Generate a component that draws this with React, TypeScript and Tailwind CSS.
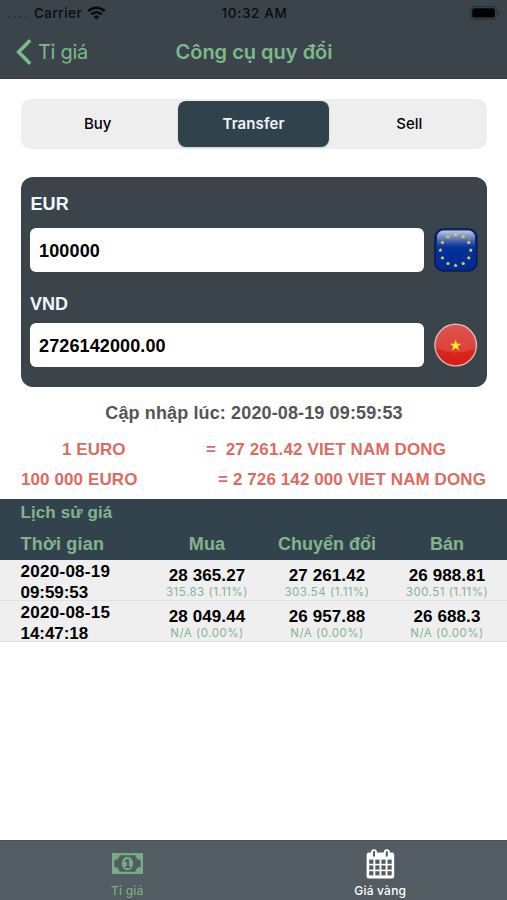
const SYSTEM = "font-['Inter','Noto_Sans',sans-serif]";

interface Rate {
  value: string;
  change: string;
}

interface HistoryRow {
  date: string;
  time: string;
  rates: Rate[];
}

const history: HistoryRow[] = [
  {
    date: "2020-08-19",
    time: "09:59:53",
    rates: [
      { value: "28 365.27", change: "315.83 (1.11%)" },
      { value: "27 261.42", change: "303.54 (1.11%)" },
      { value: "26 988.81", change: "300.51 (1.11%)" },
    ],
  },
  {
    date: "2020-08-15",
    time: "14:47:18",
    rates: [
      { value: "28 049.44", change: "N/A (0.00%)" },
      { value: "26 957.88", change: "N/A (0.00%)" },
      { value: "26 688.3", change: "N/A (0.00%)" },
    ],
  },
];

function starPoints(cx: number, cy: number, r: number, inner = 0.4) {
  return Array.from({ length: 10 }, (_, i) => {
    const radius = i % 2 === 0 ? r : r * inner;
    const angle = (Math.PI / 5) * i - Math.PI / 2;
    return `${(cx + radius * Math.cos(angle)).toFixed(2)},${(cy + radius * Math.sin(angle)).toFixed(2)}`;
  }).join(" ");
}

function EuFlag() {
  return (
    <svg width="44" height="44" viewBox="0 0 44 44" className="shrink-0">
      <defs>
        <linearGradient id="euBase" x1="0" y1="0" x2="0" y2="1">
          <stop offset="0" stopColor="#0a2a80" />
          <stop offset="0.5" stopColor="#02309a" />
          <stop offset="1" stopColor="#012c90" />
        </linearGradient>
        <linearGradient id="euGloss" x1="0" y1="0" x2="0" y2="1">
          <stop offset="0" stopColor="#fff" stopOpacity="0.75" />
          <stop offset="0.8" stopColor="#fff" stopOpacity="0.1" />
          <stop offset="1" stopColor="#fff" stopOpacity="0" />
        </linearGradient>
      </defs>
      <rect x="0.2" y="0.3" width="43.4" height="43.4" rx="9" fill="#071d5c" />
      <rect x="1.9" y="1.6" width="40" height="40.4" rx="7.5" fill="url(#euBase)" />
      <path d="M3 9a6.5 6.5 0 0 1 6.5-6.5h25A6.5 6.5 0 0 1 41 9v11H3z" fill="url(#euGloss)" />
      {Array.from({ length: 12 }, (_, i) => {
        const angle = (Math.PI / 6) * i;
        return (
          <polygon
            key={i}
            points={starPoints(21.6 + 15.2 * Math.sin(angle), 22.2 - 15.4 * Math.cos(angle), 2.1, 0.6)}
            fill="#d2cd55"
          />
        );
      })}
    </svg>
  );
}

function VnFlag() {
  return (
    <svg width="44" height="44" viewBox="0 0 44 44" className="shrink-0">
      <defs>
        <linearGradient id="vnBase" x1="0" y1="0" x2="0" y2="1">
          <stop offset="0" stopColor="#d93a35" />
          <stop offset="1" stopColor="#d81a12" />
        </linearGradient>
      </defs>
      <circle cx="21.7" cy="22.1" r="20.8" fill="url(#vnBase)" stroke="#d5b9ba" strokeWidth="1.4" />
      <path d="M1.6 25a20.4 20.4 0 1 1 40.4 0q-20 9-40.4 0z" fill="#fff" fillOpacity="0.13" />
      <polygon points={starPoints(21.6, 22.6, 6.1)} fill="#fdee25" />
    </svg>
  );
}

function WifiIcon() {
  return (
    <svg width="19" height="14" viewBox="0 0 19 14" fill="none" stroke="#080c10" strokeWidth="2.6">
      <path d="M1.2 5.1a11.8 11.8 0 0 1 16.6 0" />
      <path d="M4.3 8.4a7.4 7.4 0 0 1 10.4 0" />
      <path d="M9.5 13.6 6.6 10.7a4 4 0 0 1 5.8 0z" fill="#080c10" stroke="none" />
    </svg>
  );
}

function BatteryIcon() {
  return (
    <svg width="31" height="14" viewBox="0 0 31 14">
      <rect x="0.6" y="0.6" width="26" height="12.6" rx="3.6" fill="none" stroke="#262e34" />
      <rect x="2.2" y="2.2" width="22.8" height="9.4" rx="2.2" fill="#020304" />
      <path d="M28.3 5v4q1.7-.6 1.7-2t-1.7-2z" fill="#262e34" />
    </svg>
  );
}

function BanknoteIcon() {
  return (
    <svg width="31" height="21" viewBox="0 0 31 21">
      <path
        fillRule="evenodd"
        fill="#77ab83"
        d="M0 0h31v21H0zM7.5 2.2A5 5 0 0 1 2.3 7v7a5 5 0 0 1 5.2 4.8h16a5 5 0 0 1 5.2-4.8V7a5 5 0 0 1-5.2-4.8z"
      />
      <ellipse cx="15.5" cy="10.5" rx="5.6" ry="6.7" fill="#77ab83" />
      <path d="M12.9 7.8 15 5.9h1.9v7.4h1.5v1.6h-5.2v-1.6h1.7V8.7l-1.3 1z" fill="#4c5a60" />
    </svg>
  );
}

function CalendarIcon() {
  return (
    <svg width="29" height="30" viewBox="0 0 29 30">
      <rect x="0.6" y="3.6" width="27.6" height="25.8" rx="2.2" fill="#fff" />
      <rect x="5" y="0.3" width="6" height="8.6" rx="3" fill="#fff" />
      <rect x="17.8" y="0.3" width="6" height="8.6" rx="3" fill="#fff" />
      <rect x="7" y="2" width="2" height="5.8" rx="1" fill="#535c62" />
      <rect x="19.8" y="2" width="2" height="5.8" rx="1" fill="#535c62" />
      {[10.6, 16.4, 22.2].map((y) =>
        [3.2, 9.3, 15.4, 21.5].map((x) => (
          <rect key={`${x}-${y}`} x={x} y={y} width="4.2" height="4.2" fill="#535c62" />
        ))
      )}
    </svg>
  );
}

function Header() {
  return (
    <header className={`h-[79px] border-b border-[#2f393f] bg-[#3b444b] ${SYSTEM}`}>
      <div className="grid h-[26px] grid-cols-3 items-center pl-2 pr-1.5 text-[13.5px] font-medium text-[#080c10]">
        <div className="flex items-center">
          <div className="mt-2 flex w-[26px] gap-[3px]">
            {[0, 1, 2, 3].map((dot) => (
              <span key={dot} className="size-[2.5px] rounded-full bg-[#2a3238]" />
            ))}
          </div>
          <span className="mr-[5px] tracking-[0.45px]">Carrier</span>
          <WifiIcon />
        </div>
        <span className="text-center tracking-[0.65px]">10:32 AM</span>
        <div className="flex justify-end">
          <BatteryIcon />
        </div>
      </div>
      <div className="grid h-[52px] grid-cols-[1fr_auto_1fr] items-center pl-4 pr-4 text-[#7db989]">
        <div className="flex items-center gap-1.5">
          <svg width="16" height="26" viewBox="0 0 16 26" fill="none" stroke="currentColor" strokeWidth="3.6">
            <path d="M14.2 1.3 2.6 13l11.6 11.7" />
          </svg>
          <span className="text-[20px] tracking-[-0.3px]">Tỉ giá</span>
        </div>
        <h1 className="pl-px text-[20px] font-semibold">Công cụ quy đổi</h1>
      </div>
    </header>
  );
}

function SegmentedControl() {
  return (
    <div
      className={`mx-[20.5px] mt-5 grid h-[50px] grid-cols-[157.5px_151px_1fr] items-center rounded-[10px] bg-[#eeeeef] text-center text-[15px] font-medium text-black ${SYSTEM}`}
    >
      <span className="pr-[3px]">Buy</span>
      <span className="mb-[1px] flex h-[46px] items-center justify-center rounded-[8px] bg-[#30434d] pt-[1px] font-semibold tracking-[0.1px] text-[#eef4f8] shadow-sm">
        Transfer
      </span>
      <span className="pl-[3px]">Sell</span>
    </div>
  );
}

function Converter() {
  return (
    <section className="mx-[20.5px] mt-7 flex h-[210px] flex-col rounded-[12px] bg-[#3b444b] pl-[9.5px] text-[18px] font-bold">
      <label className="mt-4 h-5 pl-[0.5px] leading-[22px] tracking-[0.1px] text-[#f2f7fb]">EUR</label>
      <div className="mt-[15px] flex gap-[10px]">
        <div className="flex h-11 w-[394px] shrink-0 items-center rounded-[6px] bg-white px-[9px] pt-[2px] tracking-[0.15px] text-black">
          100000
        </div>
        <EuFlag />
      </div>
      <label className="mt-[21px] h-5 leading-[22px] text-[#f2f7fb]">VND</label>
      <div className="mt-2.5 flex gap-[10px]">
        <div className="flex h-11 w-[394px] shrink-0 items-center rounded-[6px] bg-white px-[9px] pt-[2px] tracking-[0.12px] text-black">
          2726142000.00
        </div>
        <VnFlag />
      </div>
    </section>
  );
}

function Summary() {
  return (
    <section className="h-[112px] pt-4 font-bold">
      <p className="h-5 pl-px text-center text-[18px] leading-[21px] tracking-[0.13px] text-[#555557]">
        Cập nhập lúc: 2020-08-19 09:59:53
      </p>
      <div className="mt-4 flex h-5 pl-[62px] text-[17px] leading-[21px] text-[#de6a60]">
        <span className="w-[144px] tracking-[0.05px]">1 EURO</span>
        <span className="whitespace-pre tracking-[0.13px]">=  27 261.42 VIET NAM DONG</span>
      </div>
      <div className="mt-2.5 flex h-5 justify-between pl-[21px] pr-[21px] text-[17px] leading-[21px] text-[#de6a60]">
        <span className="tracking-[0.1px]">100 000 EURO</span>
        <span className="tracking-[0.1px]">= 2 726 142 000 VIET NAM DONG</span>
      </div>
    </section>
  );
}

function History() {
  return (
    <section>
      <div className="h-[61px] bg-[#32434d] font-bold text-[#83b48c]">
        <h2 className="h-7 pl-[20.5px] text-[17px] leading-7 tracking-[0.1px]">Lịch sử giá</h2>
        <div className="grid h-[33px] grid-cols-[147px_120px_120px_120px] text-center text-[18px] leading-[34px]">
          <span className="pl-[20.5px] text-left tracking-[0.2px]">Thời gian</span>
          <span className="tracking-[0.2px]">Mua</span>
          <span>Chuyển đổi</span>
          <span>Bán</span>
        </div>
      </div>
      {history.map((row) => (
        <div
          key={row.date}
          className="grid h-[41px] grid-cols-[147px_120px_120px_120px] border-b border-[#dfe2e2] bg-[#efefef]"
        >
          <div className="pl-[20.5px] pt-[2px] text-[17px] leading-5 font-bold text-black">
            <p className="tracking-[0.28px]">{row.date}</p>
            <p className="leading-[21px] tracking-[-0.05px]">{row.time}</p>
          </div>
          {row.rates.map((rate, i) => (
            <div key={i} className="pt-[5px] text-center">
              <p className="text-[17px] leading-[21px] font-bold tracking-[0.1px] text-black">{rate.value}</p>
              <p className={`text-[11.5px] leading-[13px] tracking-[0.5px] text-[#86b391] ${SYSTEM}`}>
                {rate.change}
              </p>
            </div>
          ))}
        </div>
      ))}
    </section>
  );
}

function TabBar() {
  return (
    <nav
      className={`mt-auto grid h-[60px] grid-cols-2 border-t border-[#465056] bg-[#535c62] text-[12px] font-medium ${SYSTEM}`}
    >
      <div className="flex flex-col items-center pl-px text-[#77ab83]">
        <div className="flex h-[42px] items-center pt-0.5">
          <BanknoteIcon />
        </div>
        <span className="leading-4 tracking-[0.2px]">Tỉ giá</span>
      </div>
      <div className="flex flex-col items-center text-white">
        <div className="flex h-[42px] items-center pt-1">
          <CalendarIcon />
        </div>
        <span className="leading-4 tracking-[0.2px]">Giá vàng</span>
      </div>
    </nav>
  );
}

export default function App() {
  return (
    <div className="flex h-[900px] w-[507px] flex-col overflow-hidden bg-white font-['Liberation_Sans',Arial,sans-serif]">
      <Header />
      <SegmentedControl />
      <Converter />
      <Summary />
      <History />
      <TabBar />
    </div>
  );
}
